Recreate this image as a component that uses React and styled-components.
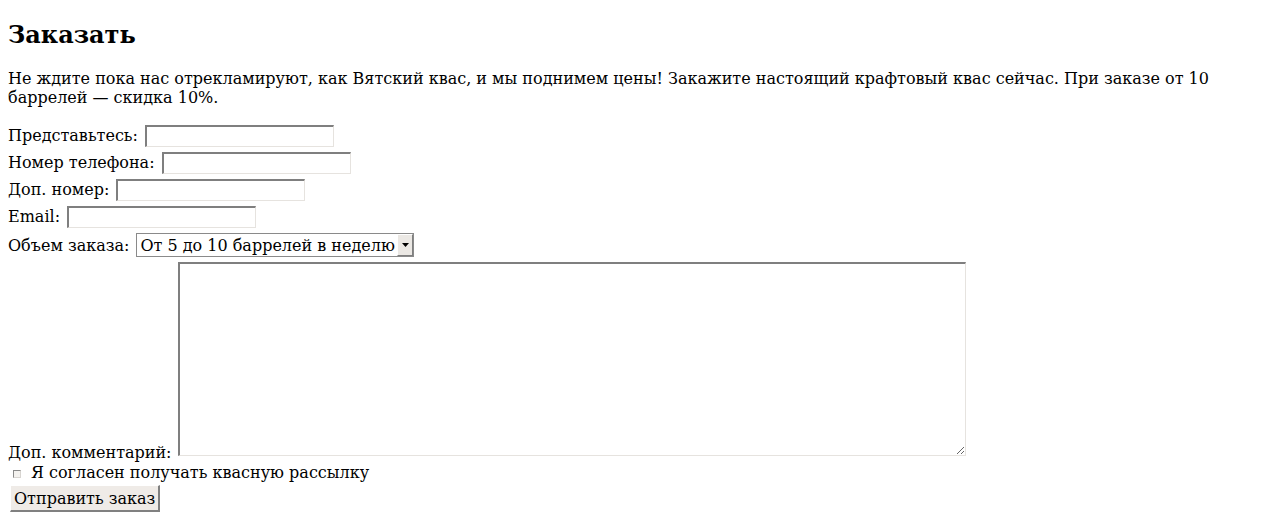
import React from "react";
import styled, { createGlobalStyle } from "styled-components";

const GlobalStyle = createGlobalStyle`
  body {
    margin: 0 8px 8px 8px;
    background: #ffffff;
    color: #000000;
    font-family: "DejaVu Serif", serif;
    font-size: 16px;
  }
`;

const Title = styled.h2`
  font-size: 24px;
  font-weight: bold;
  margin: 20px 0;
`;

const Intro = styled.p`
  margin: 16px 0 15px 0;
  line-height: 19px;
`;

const Form = styled.form`
  display: flex;
  flex-direction: column;
  align-items: flex-start;
`;

const Row = styled.div`
  display: flex;
  align-items: ${(props) => props.align || "center"};
  gap: ${(props) => props.gap || 7}px;
  height: ${(props) => (props.height ? `${props.height}px` : "auto")};
`;

const Label = styled.label`
  line-height: 19px;
  white-space: nowrap;
`;

const TextInput = styled.input`
  box-sizing: border-box;
  width: 189px;
  height: 22px;
  margin: 0;
  padding: 1px 2px;
  background: #ffffff;
  border-style: solid;
  border-width: 2px 1px 1px 2px;
  border-color: #7f7f7f #e6e3df #e6e3df #7f7f7f;
  border-radius: 0;
  font: 13px "DejaVu Sans", sans-serif;
  outline: none;
`;

const SelectBox = styled.span`
  display: inline-flex;
  align-items: stretch;
  box-sizing: border-box;
  height: 24px;
  border: 1px solid #8a8a8a;
  background: #ffffff;
`;

const Select = styled.select`
  appearance: none;
  -webkit-appearance: none;
  border: none;
  outline: none;
  background: transparent;
  margin: 0;
  padding: 0 2px 0 3px;
  font: 16px "DejaVu Serif", serif;
  color: #000000;
`;

const ArrowButton = styled.span`
  box-sizing: border-box;
  width: 16px;
  display: flex;
  align-items: center;
  justify-content: center;
  background: #ebe8e4;
  border-style: solid;
  border-width: 1px;
  border-color: #ffffff #7f7f7f #7f7f7f #ffffff;
`;

const CommentArea = styled.textarea`
  box-sizing: border-box;
  width: 788px;
  height: 194px;
  margin: 2px 0 6px 0;
  padding: 2px;
  background: #ffffff;
  border-style: solid;
  border-width: 2px 1px 1px 2px;
  border-color: #7f7f7f #e6e3df #e6e3df #7f7f7f;
  border-radius: 0;
  font: 13px "DejaVu Sans Mono", monospace;
  outline: none;
`;

const CheckRow = styled.div`
  display: flex;
  align-items: center;
  height: 20px;
`;

const Check = styled.input`
  appearance: none;
  -webkit-appearance: none;
  box-sizing: border-box;
  width: 8px;
  height: 8px;
  margin: 4px 10px 0 5px;
  border-style: solid;
  border-width: 1px;
  border-color: #8a8a8a #d8d5d1 #d8d5d1 #8a8a8a;
  background: #f4f2ef;
  border-radius: 0;
`;

const SubmitButton = styled.button`
  box-sizing: border-box;
  margin: 3px 0 0 2px;
  height: 27px;
  padding: 0 3px;
  background: #efebe7;
  border-style: solid;
  border-width: 1px 2px 2px 1px;
  border-color: #ffffff #808080 #808080 #ffffff;
  border-radius: 0;
  font: 16px "DejaVu Serif", serif;
  color: #000000;
`;

const App = () => {
  return (
    <>
      <GlobalStyle />
      <Title>Заказать</Title>
      <Intro>
        Не ждите пока нас отрекламируют, как Вятский квас, и мы поднимем цены!
        Закажите настоящий крафтовый квас сейчас. При заказе от 10 баррелей —
        скидка 10%.
      </Intro>
      <Form onSubmit={(e) => e.preventDefault()}>
        <Row height={27}>
          <Label htmlFor="name">Представьтесь:</Label>
          <TextInput id="name" type="text" />
        </Row>
        <Row height={27}>
          <Label htmlFor="phone">Номер телефона:</Label>
          <TextInput id="phone" type="tel" />
        </Row>
        <Row height={27}>
          <Label htmlFor="phone2">Доп. номер:</Label>
          <TextInput id="phone2" type="tel" />
        </Row>
        <Row height={27}>
          <Label htmlFor="email">Email:</Label>
          <TextInput id="email" type="email" />
        </Row>
        <Row height={30}>
          <Label htmlFor="volume">Объем заказа:</Label>
          <SelectBox>
            <Select id="volume" defaultValue="5-10">
              <option value="1-5">От 1 до 5 баррелей в неделю</option>
              <option value="5-10">От 5 до 10 баррелей в неделю</option>
              <option value="10+">Более 10 баррелей в неделю</option>
            </Select>
            <ArrowButton>
              <svg width="7" height="4" viewBox="0 0 7 4">
                <path d="M0 0h7L3.5 4z" fill="#000" />
              </svg>
            </ArrowButton>
          </SelectBox>
        </Row>
        <Row align="flex-end">
          <Label htmlFor="comment">Доп. комментарий:</Label>
          <CommentArea id="comment" />
        </Row>
        <CheckRow>
          <Check id="subscribe" type="checkbox" />
          <Label htmlFor="subscribe">Я согласен получать квасную рассылку</Label>
        </CheckRow>
        <SubmitButton type="submit">Отправить заказ</SubmitButton>
      </Form>
    </>
  );
};

export default App;
